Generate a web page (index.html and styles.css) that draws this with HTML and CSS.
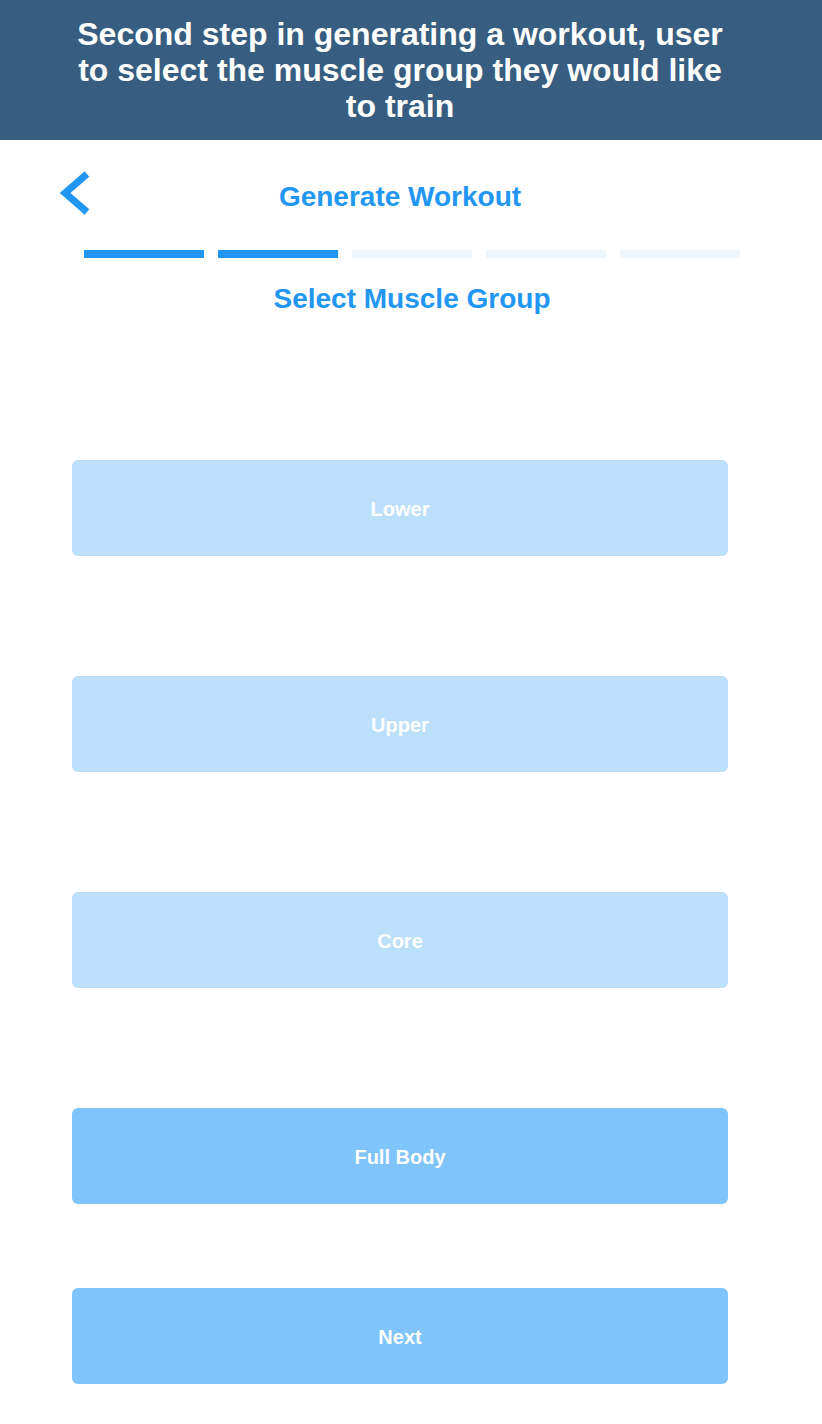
FILE: index.html
```html
<!DOCTYPE html>
<html lang="en">
<head>
<meta charset="utf-8">
<title>Generate Workout</title>
<link rel="stylesheet" href="styles.css">
</head>
<body>
<header class="banner">
  <p class="banner-text">Second step in generating a workout, user to select the muscle group they would like to train</p>
</header>
<main class="screen">
  <div class="topbar">
    <button class="back" aria-label="Back">
      <svg width="32" height="44" viewBox="0 0 32 44"><polyline points="28,3 6,22 28,41" fill="none" stroke="#2196f3" stroke-width="7" stroke-linejoin="miter" stroke-miterlimit="10"/></svg>
    </button>
    <h1 class="title">Generate Workout</h1>
    <span></span>
  </div>
  <div class="progress">
    <span class="step done"></span>
    <span class="step done"></span>
    <span class="step"></span>
    <span class="step"></span>
    <span class="step"></span>
  </div>
  <h2 class="subtitle">Select Muscle Group</h2>
  <div class="options">
    <button class="option">Lower</button>
    <button class="option">Upper</button>
    <button class="option">Core</button>
    <button class="option selected">Full Body</button>
  </div>
  <button class="option next">Next</button>
</main>
</body>
</html>
```
FILE: styles.css
```css
* { box-sizing: border-box; }
html, body { margin: 0; padding: 0; background: #ffffff; }
body { font-family: "Liberation Sans", Arial, sans-serif; }

.banner {
  background: #375e80;
  height: 140px;
  padding-top: 16px;
}
.banner-text {
  margin: 0 0 0 68px;
  width: 664px;
  color: #ffffff;
  font-weight: bold;
  font-size: 32px;
  line-height: 36px;
  text-align: center;
}

.screen { display: flex; flex-direction: column; }

.topbar {
  display: grid;
  grid-template-columns: 30px 1fr 30px;
  align-items: start;
  padding: 32px 82px 0 60px;
}
.back {
  border: 0;
  background: none;
  padding: 0;
  margin-left: -1px;
  width: 32px;
  height: 42px;
  display: block;
  overflow: visible;
}
.back svg { display: block; margin-top: -1px; }
.title {
  margin: 0;
  padding-top: 4px;
  text-align: center;
  color: #2196f3;
  font-size: 28px;
  line-height: 42px;
  font-weight: bold;
}

.progress {
  display: flex;
  gap: 14px;
  width: 656px;
  margin: 32px 0 0 84px;
}
.step {
  width: 120px;
  height: 8px;
  background: #eff7fe;
}
.step.done { background: #2196f3; }

.subtitle {
  margin: 24px 0 0 2px;
  text-align: center;
  color: #2196f3;
  font-size: 28px;
  line-height: 34px;
  font-weight: bold;
}

.options {
  display: flex;
  flex-direction: column;
  gap: 120px;
  margin-top: 144px;
}
.option {
  display: block;
  width: 656px;
  height: 96px;
  margin-left: 72px;
  padding: 3px 0 0;
  border: 0;
  border-radius: 6px;
  background: #bce0fb;
  color: #ffffff;
  font-family: "Liberation Sans", Arial, sans-serif;
  font-weight: bold;
  font-size: 20px;
}
.option.selected, .option.next { background: #80c4fc; }
.next { margin-top: 84px; }
```
